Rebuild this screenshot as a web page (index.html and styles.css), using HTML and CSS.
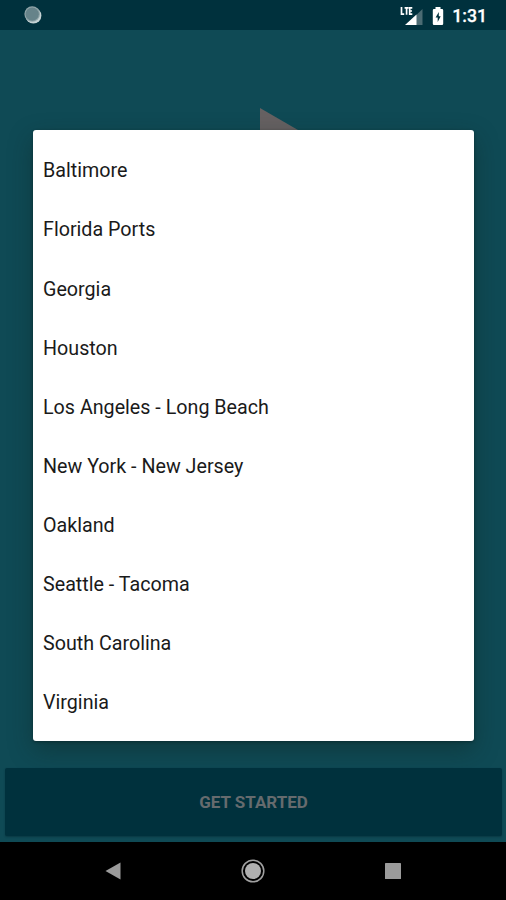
FILE: index.html
```html
<!DOCTYPE html>
<html lang="en">
<head>
<meta charset="utf-8">
<title>Select a port</title>
<link rel="stylesheet" href="styles.css">
</head>
<body>
<div class="screen">
  <header class="status">
    <svg class="sync" viewBox="0 0 20 20"><circle cx="10.4" cy="10.6" r="8" fill="#c5d2d4"/><circle cx="9.2" cy="9" r="7.800" fill="#8fa4a8"/><circle cx="9.2" cy="9.2" r="6.600" fill="#66838a"/></svg>
    <div class="indicators">
      <svg class="signal" viewBox="0 0 24 22"><path d="M22.500 3v16H6z" fill="#4b6b73"/><path d="M16.500 8.500V19H5z" fill="#fff"/><path d="M1.500 1v7.200h2.700M4.600 1.800h4M6.600 1.800v7M12.300 1.800H9.700v6.400h2.600M9.700 5h2.300" fill="none" stroke="#fff" stroke-width="1.700"/></svg>
      <svg class="battery" viewBox="0 0 12 20"><path d="M3.500 1h5v2H10q1.200 0 1.200 1.200v13.600Q11.200 19 10 19H2Q.8 19 .8 17.800V4.200Q.8 3 2 3h1.500z" fill="#fff"/><path d="M6.800 6 3.600 11.500h2.100V16l3-5.800H6.800z" fill="#00313d"/></svg>
      <span class="clock">1:31</span>
    </div>
  </header>
  <main class="app">
    <svg class="play" viewBox="0 0 76 88"><path d="M0 0l76 44L0 88z" fill="#666162"/></svg>
    <ul class="dialog">
      <li>Baltimore</li>
      <li>Florida Ports</li>
      <li>Georgia</li>
      <li>Houston</li>
      <li>Los Angeles - Long Beach</li>
      <li>New York - New Jersey</li>
      <li>Oakland</li>
      <li>Seattle - Tacoma</li>
      <li>South Carolina</li>
      <li>Virginia</li>
    </ul>
    <button class="start">GET STARTED</button>
  </main>
  <nav class="navbar">
    <svg viewBox="0 0 24 24"><path d="M4.500 12 19.500 3.500v17z" fill="#9b9b9b"/></svg>
    <svg viewBox="0 0 24 24"><circle cx="12" cy="12" r="10.800" fill="none" stroke="#a0a0a0" stroke-width="1.500"/><circle cx="12" cy="12" r="8" fill="#b0b0b0"/></svg>
    <svg viewBox="0 0 24 24"><rect x="4" y="4" width="16" height="16" rx=".6" fill="#9b9b9b"/></svg>
  </nav>
</div>
</body>
</html>
```
FILE: styles.css
```css
* { box-sizing: border-box; }
body { margin: 0; font-family: Roboto, sans-serif; }
.screen { width: 506px; height: 900px; display: flex; flex-direction: column; overflow: hidden; }
.status {
  height: 30px; flex: none; background: #00313d;
  display: flex; align-items: center; justify-content: space-between;
  padding: 0 19px 0 23px;
}
.sync { width: 20px; height: 20px; }
.indicators { display: flex; align-items: center; }
.signal { width: 24px; height: 22px; margin-top: 3px; }
.battery { width: 12px; height: 20px; margin: 1px 8px 0 8px; }
.clock { color: #fff; font-size: 17.700px; font-weight: 500; line-height: 30px; padding-top: 2px; -webkit-text-stroke: .25px #fff; }
.app {
  position: relative; flex: 1; background: #0f4a55;
  display: flex; flex-direction: column; padding: 100px 4px 6px 5px;
}
.play { position: absolute; left: 260px; top: 78px; width: 76px; height: 88px; }
.dialog {
  position: relative; width: 441px; height: 611px; flex: none;
  margin: 0 0 27px 28px; padding: 11.400px 10px 8.600px; list-style: none;
  background: #fff; border-radius: 3px;
  box-shadow: 0 9px 24px rgba(15, 35, 30, .4), 0 1px 3px rgba(0, 20, 25, .45);
}
.dialog li { height: 59.100px; line-height: 59px; font-size: 19.700px; color: #1a1a1a; white-space: nowrap; }
.start {
  position: relative; flex: 1; border: 0; border-radius: 2px; background: #00313d; color: #666b6e;
  font: 700 17px/67px Roboto, sans-serif; padding: 0; text-align: center;
  box-shadow: 0 1px 2px rgba(0, 35, 45, .45);
}
.navbar {
  height: 58px; flex: none; background: #000;
  display: flex; align-items: center; justify-content: center; gap: 116px;
}
.navbar svg { width: 24px; height: 24px; }
```
